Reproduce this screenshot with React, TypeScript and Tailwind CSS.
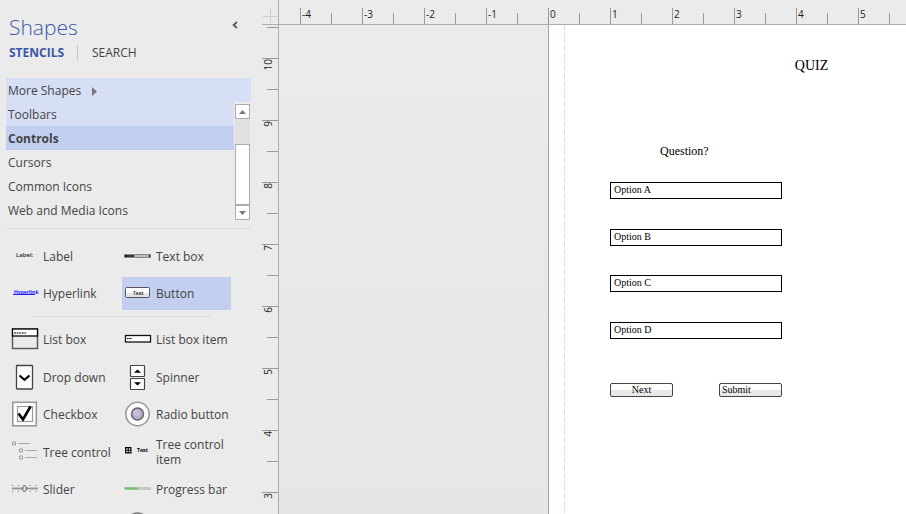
import type { ReactNode } from "react";

const SANS = "font-['Open_Sans','Noto_Sans',sans-serif]";
const SERIF = "font-['Liberation_Serif',serif]";

function Icon({ children }: { children?: ReactNode }) {
  return (
    <svg width="28" height="27" viewBox="0 0 28 27" className="shrink-0" fill="none" aria-hidden="true">
      {children}
    </svg>
  );
}

const LabelIcon = () => (
  <Icon>
    <text x="5" y="14" fontSize="6" fontWeight="600" fill="#222">Label:</text>
  </Icon>
);

const TextBoxIcon = () => (
  <Icon>
    <rect x="0" y="11" width="27" height="4" fill="#888" />
    <rect x="1" y="12" width="25" height="2" fill="#111" />
    <rect x="10" y="12.300" width="15" height="1.400" fill="#fff" />
    <path d="M3 13h6" stroke="#777" strokeWidth=".8" />
  </Icon>
);

const HyperlinkIcon = () => (
  <Icon>
    <text x="3" y="14" fontSize="5" fontWeight="700" fill="#22f">Hyperlink</text>
    <path d="M2 14.500h22" stroke="#22f" />
  </Icon>
);

const ButtonIcon = () => (
  <Icon>
    <rect x="1.500" y="7.500" width="24" height="10" rx="1" fill="#fff" stroke="#555" />
    <path d="M2 13h23v4H2z" fill="#e2e2e2" />
    <text x="9" y="14.500" fontSize="5" fontWeight="600" fill="#111">Text</text>
  </Icon>
);

const ListBoxIcon = () => (
  <Icon>
    <rect x="1.500" y="3" width="25" height="19.500" fill="#ebebeb" stroke="#555" strokeWidth="1.400" />
    <rect x="1.500" y="3" width="25" height="7" fill="#fff" stroke="#000" strokeWidth="1.300" />
    <path d="M3 7h12" stroke="#000" strokeDasharray="2 .6" />
  </Icon>
);

const ListBoxItemIcon = () => (
  <Icon>
    <rect x="1.500" y="9.500" width="25" height="6.500" fill="#fff" stroke="#111" strokeWidth="1.300" />
    <path d="M3 12.500h5" stroke="#000" strokeDasharray="1.600 .6" />
  </Icon>
);

const DropDownIcon = () => (
  <Icon>
    <rect x="5.500" y="1.500" width="16" height="23.500" rx=".5" fill="#fff" stroke="#444" strokeWidth="1.300" />
    <path d="M8.500 11.500l5 4.300 5-4.300" stroke="#000" strokeWidth="2.200" />
  </Icon>
);

const SpinnerIcon = () => (
  <Icon>
    <rect x="6.500" y="1.500" width="14" height="11" rx=".5" fill="#fff" stroke="#444" strokeWidth="1.200" />
    <rect x="6.500" y="14.500" width="14" height="11" rx=".5" fill="#fff" stroke="#444" strokeWidth="1.200" />
    <path d="M13.500 5.500l3.500 3.200h-7zM13.500 21.500l3.500-3.200h-7z" fill="#000" />
  </Icon>
);

const CheckboxIcon = () => (
  <Icon>
    <rect x="1.800" y="1.300" width="23.500" height="23.500" fill="#fff" stroke="#999" strokeWidth="1.600" />
    <rect x="6.500" y="5.500" width="15" height="15" fill="#fff" stroke="#999" strokeWidth="1.200" />
    <path d="M7.500 12.500l4.500 6 7.500-13" stroke="#000" strokeWidth="2.600" />
  </Icon>
);

const RadioIcon = () => (
  <Icon>
    <circle cx="13.500" cy="13" r="11.700" fill="#fff" stroke="#999" strokeWidth="1.600" />
    <circle cx="13.500" cy="13" r="6" fill="#b8add0" stroke="#666" strokeWidth="1.500" />
    <circle cx="12.500" cy="12" r="3" fill="#c8bfdc" />
  </Icon>
);

const TreeIcon = () => (
  <Icon>
    <path d="M7 4.500h12M14 11.500h12M14 18.500h12" stroke="#aaa" />
    <path d="M1.500 3h3v3h-3zM8.500 10h3v3h-3zM8.500 17h3v3h-3z" stroke="#999" fill="#f4f4f4" />
  </Icon>
);

const TreeItemIcon = () => (
  <Icon>
    <rect x="1" y="8" width="6.500" height="6.500" fill="#000" />
    <path d="M2.200 9.200h1.500v1.500h-1.500zM4.800 9.200h1.500v1.500h-1.500zM2.200 11.800h1.500v1.500h-1.500zM4.800 11.800h1.500v1.500h-1.500z" fill="#fff" />
    <text x="13" y="13" fontSize="5" fontWeight="700" fill="#000">Text</text>
  </Icon>
);

const SliderIcon = () => (
  <Icon>
    <path d="M1 12.500h26" stroke="#999" strokeWidth="2" />
    <path d="M1 9.500h26M1 15.500h26" stroke="#777" strokeDasharray="1 4.900" />
    <path d="M13.500 9l1.800 2v3l-1.800 2-1.800-2v-3z" fill="#ddd" stroke="#555" strokeWidth=".9" />
  </Icon>
);

const ProgressIcon = () => (
  <Icon>
    <rect x="0" y="11" width="27" height="3" rx="1" fill="#c4c4c4" />
    <rect x="1" y="11.500" width="13" height="2" fill="#6cc66c" />
  </Icon>
);

const CircleIcon = () => (
  <Icon>
    <circle cx="13.500" cy="13" r="11" fill="#f4f4f4" stroke="#777" strokeWidth="1.600" />
  </Icon>
);

type Shape = { name: string; icon: ReactNode; selected?: boolean };

const quickShapes: Shape[] = [
  { name: "Label", icon: <LabelIcon /> },
  { name: "Text box", icon: <TextBoxIcon /> },
  { name: "Hyperlink", icon: <HyperlinkIcon /> },
  { name: "Button", icon: <ButtonIcon />, selected: true },
];

const shapes: Shape[] = [
  { name: "List box", icon: <ListBoxIcon /> },
  { name: "List box item", icon: <ListBoxItemIcon /> },
  { name: "Drop down", icon: <DropDownIcon /> },
  { name: "Spinner", icon: <SpinnerIcon /> },
  { name: "Checkbox", icon: <CheckboxIcon /> },
  { name: "Radio button", icon: <RadioIcon /> },
  { name: "Tree control", icon: <TreeIcon /> },
  { name: "Tree control item", icon: <TreeItemIcon /> },
  { name: "Slider", icon: <SliderIcon /> },
  { name: "Progress bar", icon: <ProgressIcon /> },
];

function ShapeButton({ name, icon, selected }: Shape) {
  return (
    <button
      type="button"
      aria-pressed={!!selected}
      className={`flex h-[33px] items-center gap-1 pl-0.5 text-left text-xs leading-[15px] ${selected ? "bg-[#c2cff1]" : ""}`}
    >
      {icon}
      <span>{name}</span>
    </button>
  );
}

const stencils = ["Toolbars", "Controls", "Cursors", "Common Icons", "Web and Media Icons"];

function stencilStyle(name: string) {
  if (name === "Toolbars") return "bg-[#d6dff6]";
  if (name === "Controls") return "bg-[#c2cff1] font-bold";
  return "";
}

function ShapesPanel() {
  return (
    <aside className="flex w-[262px] shrink-0 flex-col overflow-hidden pl-1.5 pr-[11px] pt-3.5">
      <header className="flex h-7 items-center justify-between pl-[3px] pr-[13px]">
        <h1 className="text-[21px] font-light text-[#3c55a8]">Shapes</h1>
        <button type="button" aria-label="Collapse" className="mb-1.5">
          <svg width="6" height="8" viewBox="0 0 6 8" fill="none" aria-hidden="true">
            <path d="M5 .8L1.600 4 5 7.200" stroke="#555" strokeWidth="1.800" />
          </svg>
        </button>
      </header>
      <nav className="mt-0.5 flex h-[18px] shrink-0 items-center pl-[3px] text-xs">
        <button type="button" className="w-[68px] text-left font-bold text-[#3c55a8]">STENCILS</button>
        <button type="button" className="border-l border-[#c6c6c6] pl-3.5">SEARCH</button>
      </nav>

      <button type="button" className="mt-4 flex h-6 shrink-0 items-center gap-[11px] bg-[#d6dff6] pl-0.5 pt-0.5 text-xs">
        More Shapes
        <svg width="5" height="9" viewBox="0 0 5 9" aria-hidden="true">
          <path d="M0 0L5 4.500L0 9z" fill="#777" />
        </svg>
      </button>
      <div className="flex shrink-0 border-b border-[#dedede] pb-1.5">
        <ul className="flex-1 text-xs">
          {stencils.map((name) => (
            <li key={name}>
              <button type="button" className={`block h-6 w-full pl-0.5 pt-px text-left ${stencilStyle(name)}`}>
                {name}
              </button>
            </li>
          ))}
        </ul>
        <div className="ml-px mr-px mt-0.5 flex h-[116px] w-[15px] flex-col bg-[#e0e0e0]">
          <button type="button" aria-label="Scroll up" className="flex h-[15px] items-center justify-center border border-[#ababab] bg-white">
            <svg width="7" height="4" viewBox="0 0 7 4" aria-hidden="true"><path d="M3.500 0L7 4H0z" fill="#777" /></svg>
          </button>
          <div className="mt-auto h-[61px] border border-[#ababab] bg-white" />
          <button type="button" aria-label="Scroll down" className="flex h-[15px] items-center justify-center border border-[#ababab] bg-white">
            <svg width="7" height="4" viewBox="0 0 7 4" aria-hidden="true"><path d="M3.500 4L7 0H0z" fill="#777" /></svg>
          </button>
        </div>
      </div>

      <div className="ml-[3px] mt-[11px] grid shrink-0 grid-cols-[109px_109px] gap-1">
        {quickShapes.map((s) => (
          <ShapeButton key={s.name} {...s} />
        ))}
      </div>
      <hr className="ml-[26px] mr-10 mt-1.5 border-[#dedede]" />
      <div className="ml-[3px] mt-1.5 grid h-[221px] shrink-0 grid-cols-[109px_109px] content-between gap-x-1">
        {shapes.map((s) => (
          <ShapeButton key={s.name} {...s} />
        ))}
        <button type="button" aria-label="Help" className="col-start-2 flex h-[33px] items-start pl-0.5">
          <CircleIcon />
        </button>
      </div>
    </aside>
  );
}

function TopRuler() {
  return (
    <div className="flex h-[25px] items-end overflow-hidden border-b border-[#ababab] pl-[21px] text-[10px] leading-3 text-[#222]">
      {[-4, -3, -2, -1, 0, 1, 2, 3, 4, 5, 6, 7, 8].map((n) => (
        <div key={n} className={`w-[62px] shrink-0 items-end ${n > 5 ? "hidden xl:flex" : "flex"}`}>
          <div className="h-4 w-[31px] border-l border-[#999] pl-px">{n}</div>
          <div className="h-[11px] w-[31px] border-l border-[#999]" />
        </div>
      ))}
    </div>
  );
}

function SideRuler() {
  return (
    <div className="flex w-[17px] shrink-0 flex-col items-end overflow-hidden border-r border-[#ababab] pt-0.5 text-[10px] leading-3 text-[#222]">
      <div className="h-[31px] w-[11px] shrink-0 border-t border-[#999]" />
      {[10, 9, 8, 7, 6, 5, 4, 3, 2, 1, 0].map((n) => (
        <div key={n} className={`h-[62px] shrink-0 flex-col items-end ${n < 3 ? "hidden xl:flex" : "flex"}`}>
          <div className="h-[31px] w-4 border-t border-[#999]">
            <span className="block w-3 rotate-180 [writing-mode:vertical-rl]">{n}</span>
          </div>
          <div className="h-[31px] w-[11px] border-t border-[#999]" />
        </div>
      ))}
    </div>
  );
}

const actionStyle =
  "h-3.5 w-[63px] rounded-xs border border-[#444] bg-linear-to-b from-white from-50% to-[#e8e8e8] to-50% text-[10px] leading-3";

function QuizPage() {
  return (
    <div className={`flex w-[527px] shrink-0 border-l border-[#9aa3b5] bg-white text-black ${SERIF}`}>
      <div className="ml-[15px] w-px bg-[repeating-linear-gradient(#d8d8d8_0_4px,#efefef_4px_7px)]" />
      <div className="w-[493px] pt-[31px]">
        <h2 className="text-center text-sm">QUIZ</h2>
        <form className="ml-[45px] mt-[67px] w-[172px]" onSubmit={(e) => e.preventDefault()}>
          <p className="pl-[50px] text-xs">Question?</p>
          <div className="mt-[23px] flex h-[157px] flex-col justify-between">
            {["Option A", "Option B", "Option C", "Option D"].map((o) => (
              <input
                key={o}
                aria-label={o}
                defaultValue={o}
                className="h-[17px] w-full border border-black bg-white pb-0.5 pl-[3px] text-[10px] leading-3"
              />
            ))}
          </div>
          <div className="mt-11 flex justify-between">
            <button type="button" className={actionStyle}>Next</button>
            <button type="submit" className={`${actionStyle} pl-0.5 text-left`}>Submit</button>
          </div>
        </form>
      </div>
    </div>
  );
}

export default function App() {
  return (
    <div className={`flex h-screen overflow-hidden bg-[#ebebeb] text-[#444] ${SANS}`}>
      <ShapesPanel />
      <main className="flex min-w-0 flex-1 flex-col">
        <div className="flex shrink-0">
          <div className="flex h-[25px] w-[17px] shrink-0 items-end border-b border-r border-[#ababab] pl-px">
            <svg width="14" height="16" viewBox="0 0 14 16" aria-hidden="true">
              <path d="M7.500 1v14M0 8.500h14" stroke="#ccc" />
            </svg>
          </div>
          <div className="min-w-0 flex-1">
            <TopRuler />
          </div>
        </div>
        <div className="flex min-h-0 flex-1">
          <SideRuler />
          <div className="flex min-w-0 flex-1 overflow-hidden bg-linear-to-b from-[#ebebeb] to-[#e6e6e6] pl-[269px]">
            <QuizPage />
          </div>
        </div>
      </main>
    </div>
  );
}
